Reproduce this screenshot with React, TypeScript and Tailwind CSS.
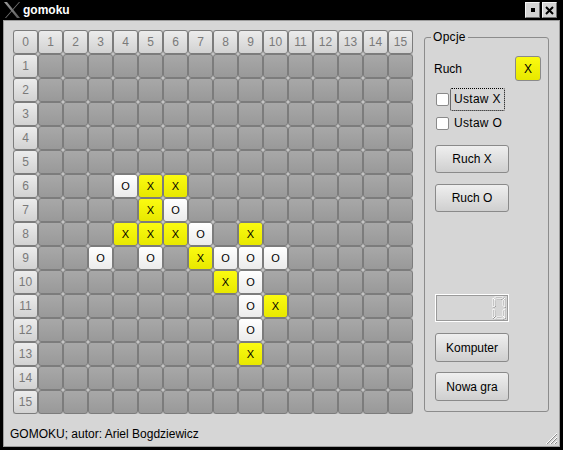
import React from 'react';

type Mark = 'X' | 'O';

// board state, keyed "col,row"
const marks: Record<string, Mark> = {
  '4,6': 'O', '5,6': 'X', '6,6': 'X',
  '5,7': 'X', '6,7': 'O',
  '4,8': 'X', '5,8': 'X', '6,8': 'X', '7,8': 'O', '9,8': 'X',
  '3,9': 'O', '5,9': 'O', '7,9': 'X', '8,9': 'O', '9,9': 'O', '10,9': 'O',
  '8,10': 'X', '9,10': 'O',
  '9,11': 'O', '10,11': 'X',
  '9,12': 'O',
  '9,13': 'X',
};

function Cell({ row, col }: { row: number; col: number }) {
  const base = 'w-[25px] h-[24px] border border-[#7c7c7c] rounded-[3px] flex items-center justify-center bg-linear-to-b';
  if (row === 0 || col === 0) {
    return (
      <div className={`${base} from-[#ececec] to-[#d2d2d2] text-[12px] text-[#7a7a7a]`}>
        {row === 0 ? col : row}
      </div>
    );
  }
  const m = marks[`${col},${row}`];
  if (m === 'X') {
    return <div className={`${base} from-[#fbfb10] to-[#e8e800] text-[11px] text-black`}>X</div>;
  }
  if (m === 'O') {
    return <div className={`${base} from-[#ffffff] to-[#ebebeb] text-[11px] text-black`}>O</div>;
  }
  return <div className={`${base} from-[#a8a8a8] to-[#999999]`} />;
}

function Board() {
  const cells = [];
  for (let r = 0; r < 16; r++) {
    for (let c = 0; c < 16; c++) {
      cells.push(<Cell key={`${r}-${c}`} row={r} col={c} />);
    }
  }
  return <div className="grid grid-cols-[repeat(16,25px)] bg-[#c4c4c4] w-[400px] h-[384px]">{cells}</div>;
}

function Button({ label, className = '' }: { label: string; className?: string }) {
  return (
    <div
      className={`ml-[10px] w-[74px] h-[28px] rounded-[3px] border border-[#8a8a8a] bg-linear-to-b from-[#efefef] to-[#cfcfcf] flex items-center justify-center text-[12px] text-black ${className}`}
    >
      {label}
    </div>
  );
}

function Checkbox({ label, focused }: { label: string; focused?: boolean }) {
  return (
    <div className="h-[24px] flex items-center pl-[11px]">
      <div className="w-[13px] h-[13px] bg-white border border-[#8a8a8a] rounded-[2px]" />
      <span
        className={`ml-[1px] px-[3px] h-[23px] flex items-center text-[12px] tracking-[0.3px] ${
          focused ? 'border border-dotted border-black rounded-[2px]' : 'border border-transparent'
        }`}
      >
        {label}
      </span>
    </div>
  );
}

function LcdZero() {
  // hollow 7-segment style zero
  const segs = [
    'M2.5,1 L11.5,1 L9.5,3 L4.5,3 Z',
    'M1,2 L3,4 L3,10 L1,11 Z',
    'M13,2 L13,11 L11,10 L11,4 Z',
    'M1,13 L3,14 L3,20 L1,22 Z',
    'M13,13 L13,22 L11,20 L11,14 Z',
    'M4.5,21 L9.5,21 L11.5,23 L2.5,23 Z',
  ];
  return (
    <svg width="14" height="24" viewBox="0 0 14 24" className="mr-[2px]">
      {segs.map((d, i) => (
        <path key={`s${i}`} d={d} fill="none" stroke="#8a8a8a" strokeWidth="1" transform="translate(0.5,0.5)" />
      ))}
      {segs.map((d, i) => (
        <path key={i} d={d} fill="none" stroke="#ffffff" strokeWidth="1" />
      ))}
    </svg>
  );
}

export default function App() {
  return (
    <div className="w-[563px] h-[450px] bg-black flex flex-col font-['Liberation_Sans',sans-serif] overflow-hidden">
      {/* title bar */}
      <div className="h-[20px] flex items-center">
        <svg width="18" height="18" viewBox="0 0 18 18" className="ml-[3px]">
          <defs>
            <linearGradient id="xg" x1="0" y1="0" x2="1" y2="1">
              <stop offset="0" stopColor="#9a9a9a" />
              <stop offset="1" stopColor="#5a5a5a" />
            </linearGradient>
          </defs>
          <polygon points="1,1 4,1 17,17 14,17" fill="url(#xg)" />
          <polygon points="16,1 17,1 3,17 2,17" fill="url(#xg)" />
        </svg>
        <span className="ml-[2px] text-white font-bold text-[12px]">gomoku</span>
        <div className="ml-auto mr-[6px] flex gap-[2px]">
          <div className="w-[15px] h-[16px] bg-[#d4d4d4] border border-[#f4f4f4] border-r-[#707070] border-b-[#707070] flex items-center justify-center">
            <div className="w-[4px] h-[4px] bg-black" />
          </div>
          <div className="w-[15px] h-[16px] bg-[#d4d4d4] border border-[#f4f4f4] border-r-[#707070] border-b-[#707070] flex items-center justify-center">
            <svg width="9" height="9" viewBox="0 0 9 9">
              <path d="M1,1 L8,8 M8,1 L1,8" stroke="black" strokeWidth="2" />
            </svg>
          </div>
        </div>
      </div>

      {/* client area */}
      <div className="relative flex-1 mx-[3px] mb-[3px] bg-[#d6d6d6] border border-[#9c9c9c] flex flex-col">
        <div className="flex pt-[9px] pl-[9px]">
          <Board />

          {/* Opcje group */}
          <div className="relative ml-[11px] mt-[7px] w-[125px] h-[375px] border border-[#8c8c8c] rounded-[3px] flex flex-col text-black">
            <span className="absolute -top-[8px] left-[6px] px-[2px] bg-[#d6d6d6] text-[12px] leading-[14px] tracking-[0.3px]">
              Opcje
            </span>

            <div className="mt-[18px] flex items-center justify-between pl-[9px] pr-[7px]">
              <span className="text-[12px]">Ruch</span>
              <div className="w-[26px] h-[25px] rounded-[3px] border border-[#8a8a8a] bg-linear-to-b from-[#fbfb10] to-[#e8e800] flex items-center justify-center text-[12px]">
                X
              </div>
            </div>

            <div className="mt-[6px]">
              <Checkbox label="Ustaw X" focused />
              <Checkbox label="Ustaw O" />
            </div>

            <Button label="Ruch X" className="mt-[10px]" />
            <Button label="Ruch O" className="mt-[11px]" />

            <div className="mt-[82px] ml-[10px] w-[74px] h-[28px] border border-white shadow-[inset_1px_1px_0_#9a9a9a,inset_-1px_-1px_0_#9a9a9a] flex items-center justify-end">
              <LcdZero />
            </div>

            <Button label="Komputer" className="mt-[11px] h-[29px]" />
            <Button label="Nowa gra" className="mt-[10px] h-[29px]" />
          </div>
        </div>

        <div className="mt-[13px] h-[14px] leading-[14px] pl-[6px] text-[12px] text-black">
          GOMOKU; autor: Ariel Bogdziewicz
        </div>

        {/* size grip */}
        <svg width="14" height="14" viewBox="0 0 14 14" className="absolute right-[1px] bottom-[1px]">
          <path d="M13,2 L2,13 M13,6 L6,13 M13,10 L10,13" stroke="#ffffff" strokeWidth="1" />
          <path d="M13,3 L3,13 M13,7 L7,13 M13,11 L11,13" stroke="#8a8a8a" strokeWidth="1" />
        </svg>
      </div>
    </div>
  );
}
